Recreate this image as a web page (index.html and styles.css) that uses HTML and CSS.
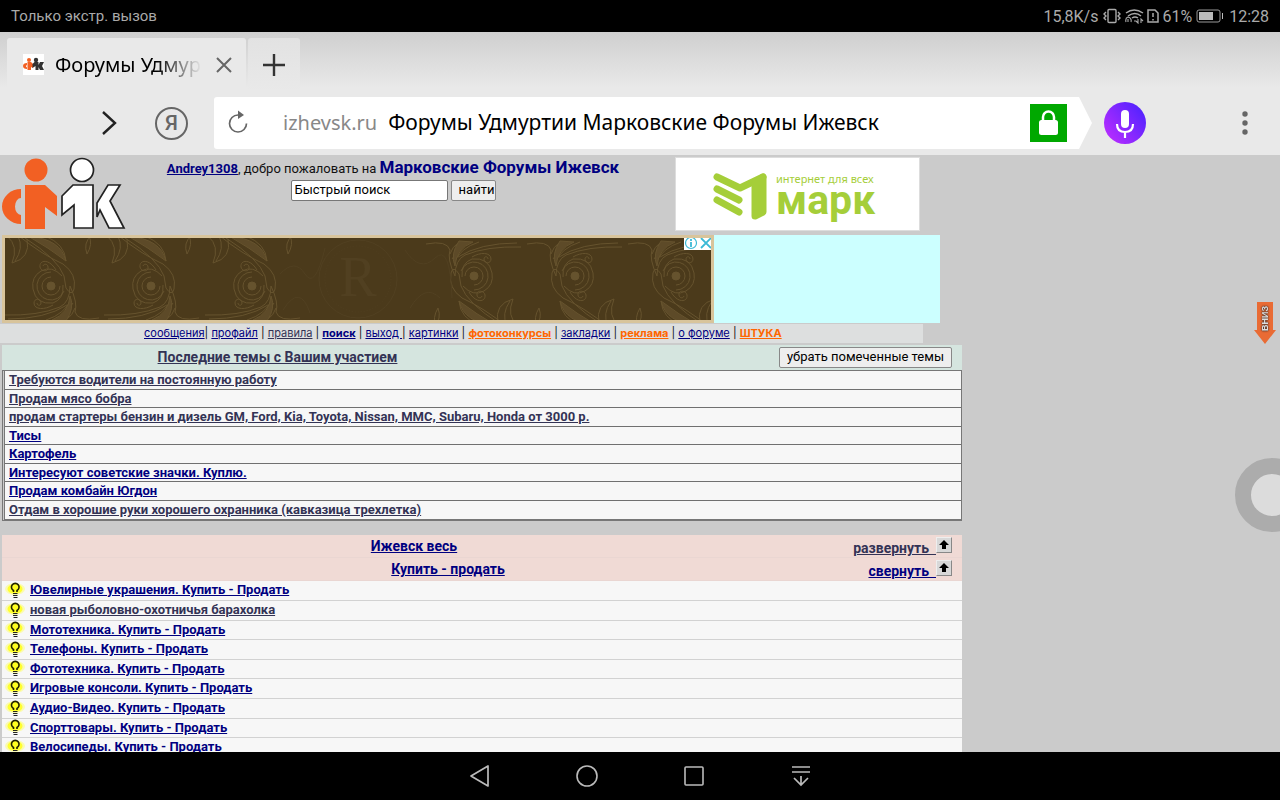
FILE: index.html
```html
<!DOCTYPE html>
<html lang="ru">
<head>
<meta charset="utf-8">
<title>Форумы Удмуртии Марковские Форумы Ижевск</title>
<link rel="stylesheet" href="styles.css">
</head>
<body>
<svg class="defs" width="0" height="0" aria-hidden="true">
  <defs>
    <symbol id="mk" viewBox="0 0 126 74">
      <g fill="#f26023">
        <circle cx="36" cy="13" r="11.500"/>
        <path d="M25 28H45L57 39V59L45 50V72H25Z"/>
        <path d="M21 32V41A6 8.500 0 0 0 21 58V67A19 17.500 0 0 1 21 32Z"/>
      </g>
      <g fill="#fff" stroke="#222" stroke-width="1.700">
        <circle cx="82" cy="13" r="11.500"/>
        <path d="M73 28H93V71H74V48L62 58V39Z"/>
        <path d="M108 28H120L110 44L124 71H109L100 53L97 60V46Z"/>
      </g>
    </symbol>
    <symbol id="bulb" viewBox="0 0 22 18">
      <ellipse cx="11" cy="8" rx="10" ry="6" fill="#ffff55" opacity=".45"/>
      <ellipse cx="11" cy="8" rx="7.500" ry="5" fill="#ffff22" opacity=".9"/>
      <path d="M9.500 11V9.500A3.800 3.800 0 1 1 13 9.500V11" fill="#ffff20" stroke="#222200" stroke-width="1.600"/>
      <path d="M9 12.500h4.500M9 14.500h4.500M9.500 16.500h4" stroke="#222" stroke-width="1"/>
    </symbol>
    <symbol id="up" viewBox="0 0 12 12"><path d="M6 1L11 6H8V10H4V6H1Z" fill="#000"/></symbol>
    <g id="scroll" fill="none" stroke="#66532e" stroke-width="1">
      <circle cx="48" cy="50" r="4" fill="#66532e"/>
      <path d="M48 41A9 9 0 1 0 57 50M48 36A14 14 0 1 0 61 55M59 40Q49 29 38 35Q28 41 30 53Q33 69 50 67Q61 63 60 49"/>
      <path d="M53 34C46 22 36 24 37 31C38 36 46 36 45 31C45 28 41 27 40 30"/>
      <path d="M50 69C42 74 31 74 31 67C31 62 38 62 38 67C38 70 34 70 34 67"/>
      <path d="M16 0Q38 18 60 28Q74 38 71 53Q69 61 63 52L61 40Q55 23 22 2"/>
      <path d="M25 0Q58 3 63 25Q46 12 25 0Z" fill="#5d4a28"/>
      <path d="M42 0Q62 8 63 25M4 0Q16 10 9 27Q28 22 24 3M12 25Q21 12 15 0M84 18Q80 7 88 0M84 18Q90 8 86 0"/>
      <path d="M1 79Q35 80 57 71Q67 66 67 50Q75 67 72 76Q75 86 96 82M5 83Q42 83 64 69M43 84Q62 78 68 63M55 84Q65 76 70 67M63 84Q70 79 72 72"/>
      <path d="M49 84Q66 77 67 60Q72 72 63 85Z" fill="#5d4a28"/>
    </g>
  </defs>
</svg>

<div class="status">
  <span class="carrier">Только экстр. вызов</span>
  <span class="status-right">
    <span>15,8K/s</span>
    <svg class="vibrate" width="18" height="16" viewBox="0 0 18 16" fill="none" stroke="#aaa" stroke-width="1.400"><rect x="5" y="1.500" width="8" height="13" rx="1"/><path d="M3 4L1 6L3 8L1 10L3 12M15 4L17 6L15 8L17 10L15 12"/></svg>
    <svg width="20" height="16" viewBox="0 0 20 16" fill="none" stroke="#aaa" stroke-width="1.500"><path d="M2 5Q10-1 19 5M4 8Q11 3 17 8M8 10Q11 8 14 10"/><path d="M2 14Q1 10 4 9Q8 10 7 14M4 14v-3M10 13h2M14 11v4l-2-2M17 15v-4l2 2" stroke-width="1.100"/></svg>
    <svg width="12" height="16" viewBox="0 0 12 16" fill="none" stroke="#aaa" stroke-width="1.500"><path d="M1 2H8L11 5V14H1ZM6 5v4M6 11v1.500"/></svg>
    <span>61%</span>
    <svg class="battery" width="28" height="14" viewBox="0 0 28 14"><rect x="1" y="1" width="23" height="12" rx="2" fill="none" stroke="#999"/><rect x="3" y="3" width="14" height="8" fill="#bbb"/><path d="M26 4h1v6h-1z" fill="#bbb"/></svg>
    <span>12:28</span>
  </span>
</div>

<header class="chrome">
  <div class="tabs">
    <div class="tab">
      <svg class="favicon" width="21" height="21" viewBox="0 0 21 21"><rect width="21" height="21" fill="#fff"/><g fill="#f26023"><circle cx="6" cy="6" r="2"/><path d="M4.500 8h3.500l2 2v4l-2-1v3H4.500zM4 9v2q-2 1 0 2.500V15q-4 0-4-3t4-3z"/></g><g fill="#333"><circle cx="13" cy="6" r="2.200"/><path d="M11.500 8h4v8h-3v-4l-3 2v-4zM17 8h4l-2 4 2 4h-4l-2-4z"/></g></svg>
      <span class="tab-title">Форумы Удмуртии</span>
      <button class="plain" aria-label="Закрыть"><svg width="16" height="16" viewBox="0 0 16 16" stroke="#666" stroke-width="2"><path d="M1 1L15 15M15 1L1 15"/></svg></button>
    </div>
    <button class="plain new-tab" aria-label="Новая вкладка"><svg width="22" height="22" viewBox="0 0 22 22" stroke="#333" stroke-width="2.400"><path d="M11 0V22M0 11H22"/></svg></button>
  </div>
  <div class="toolbar">
    <button class="plain" aria-label="Вперёд"><svg width="16" height="24" viewBox="0 0 16 24" fill="none" stroke="#222" stroke-width="2.400"><path d="M2 1L14 12L2 23"/></svg></button>
    <button class="ya" aria-label="Яндекс">Я</button>
    <div class="address">
      <svg width="20" height="24" viewBox="0 0 20 24" fill="none" stroke="#666" stroke-width="1.700"><path d="M10 5A8.500 8.500 0 1 0 18.500 13.500"/><path d="M10 0.500V9L16 5Z" fill="#666" stroke="none"/></svg>
      <span class="host">izhevsk.ru</span>
      <span class="page-title">Форумы Удмуртии Марковские Форумы Ижевск</span>
      <svg class="lock" width="37" height="38" viewBox="0 0 37 38"><rect width="37" height="38" fill="#00a800"/><rect x="9" y="16" width="19" height="15" rx="2.500" fill="#fff"/><path d="M13 17V13A5.500 5.500 0 0 1 24 13V17" fill="none" stroke="#fff" stroke-width="2.500"/></svg>
    </div>
    <button class="plain mic" aria-label="Голосовой поиск"><svg width="42" height="42" viewBox="0 0 42 42"><defs><linearGradient id="mg" x1="0" y1=".9" x2="1" y2=".1"><stop offset="0.100" stop-color="#b32cff"/><stop offset="1" stop-color="#4a22ff"/></linearGradient></defs><circle cx="21" cy="21" r="21" fill="url(#mg)"/><rect x="17" y="8" width="8" height="18" rx="4" fill="#fff"/><path d="M13 22Q13 30 21 30T29 22M21 30V36" fill="none" stroke="#fff" stroke-width="2.200"/></svg></button>
    <button class="plain more" aria-label="Меню"><svg width="6" height="24" viewBox="0 0 6 24" fill="#666"><circle cx="3" cy="3" r="2.700"/><circle cx="3" cy="12" r="2.700"/><circle cx="3" cy="21" r="2.700"/></svg></button>
  </div>
</header>

<main class="page">
  <div class="head">
    <svg width="126" height="74"><use href="#mk"/></svg>
    <div class="welcome">
      <p><a class="bold" href="#">Andrey1308</a>, добро пожаловать на <strong>Марковские Форумы Ижевск</strong></p>
      <form class="search"><input type="text" value="Быстрый поиск" aria-label="Быстрый поиск"><button type="button">найти</button></form>
    </div>
    <a class="mark" href="#">
      <svg width="55" height="50" viewBox="0 0 55 50" stroke="#a5ce39" stroke-width="7" stroke-linecap="round" stroke-linejoin="round" fill="none"><path d="M4 5L27 16L50 5"/><path d="M4 17L26 28M4 28L26 40"/><path d="M42 12V44L50 40V5Z" fill="#a5ce39"/></svg>
      <span class="mark-text"><small>интернет для всех</small><b>марк</b></span>
    </a>
  </div>

  <div class="ads">
    <div class="banner">
      <svg width="706" height="82" viewBox="0 0 706 82" aria-hidden="true">
        <rect width="706" height="82" fill="#4b3a1b"/>
        <use href="#scroll" x="-2" y="-2"/><use href="#scroll" x="98" y="-2"/><use href="#scroll" x="199" y="-2"/>
        <g transform="rotate(180 353 41)"><use href="#scroll" x="-13" y="-6"/><use href="#scroll" x="88" y="-6"/><use href="#scroll" x="189" y="-6"/></g>
        <g fill="none" stroke="#514021"><circle cx="353" cy="41" r="39"/><circle cx="353" cy="41" r="33" stroke-dasharray="1 2"/><path d="M275 36Q290 20 300 36T320 10M278 72Q295 45 305 75M400 12Q415 35 430 20T447 60M405 70Q420 45 435 60"/></g>
        <text x="353" y="58" text-anchor="middle" class="banner-r">R</text>
      </svg>
      <span class="ad-tools"><svg width="14" height="14" viewBox="0 0 14 14" fill="none" stroke="#3bb9d6" stroke-width="1.200"><circle cx="7" cy="7" r="5.500"/><path d="M7 6V11M7 3V5" stroke-width="1.800"/></svg><svg width="14" height="14" viewBox="0 0 14 14" stroke="#3bb9d6" stroke-width="1.800"><path d="M2 2L12 12M12 2L2 12"/></svg></span>
    </div>
    <div class="cyan"></div>
  </div>

  <nav class="menu"><a href="#">сообщения</a>| <a href="#">профайл</a> | <a class="seen" href="#">правила</a> | <a class="bold" href="#">поиск</a> | <a href="#">выход </a>| <a href="#">картинки</a> | <a class="hot" href="#">фотоконкурсы</a> | <a href="#">закладки</a> | <a class="hot" href="#">реклама</a> | <a href="#">о форуме</a> | <a class="hot" href="#">ШТУКА</a></nav>

  <section class="recent">
    <div class="recent-head"><h2><a class="seen" href="#">Последние темы с Вашим участием</a></h2><button type="button">убрать помеченные темы</button></div>
    <ul class="topics">
      <li><a class="seen" href="#">Требуются водители на постоянную работу</a></li>
      <li><a class="seen" href="#">Продам мясо бобра</a></li>
      <li><a class="seen" href="#">продам стартеры бензин и дизель GM, Ford, Kia, Toyota, Nissan, MMC, Subaru, Honda от 3000 р.</a></li>
      <li><a href="#">Тисы</a></li>
      <li><a href="#">Картофель</a></li>
      <li><a href="#">Интересуют советские значки. Куплю.</a></li>
      <li><a href="#">Продам комбайн Югдон</a></li>
      <li><a class="seen" href="#">Отдам в хорошие руки хорошего охранника (кавказица трехлетка)</a></li>
    </ul>
  </section>

  <section class="forums">
    <div class="group"><h2><a href="#">Ижевск весь</a></h2><a class="toggle seen" href="#">развернуть &nbsp;</a><button type="button" class="arrow" aria-label="Вверх"><svg width="12" height="12"><use href="#up"/></svg></button></div>
    <div class="group sub"><h2><a href="#">Купить - продать</a></h2><a class="toggle" href="#">свернуть &nbsp;</a><button type="button" class="arrow" aria-label="Вверх"><svg width="12" height="12"><use href="#up"/></svg></button></div>
    <ul class="list">
      <li><svg width="22" height="18"><use href="#bulb"/></svg><a href="#">Ювелирные украшения. Купить - Продать</a></li>
      <li><svg width="22" height="18"><use href="#bulb"/></svg><a class="seen" href="#">новая рыболовно-охотничья барахолка</a></li>
      <li><svg width="22" height="18"><use href="#bulb"/></svg><a href="#">Мототехника. Купить - Продать</a></li>
      <li><svg width="22" height="18"><use href="#bulb"/></svg><a href="#">Телефоны. Купить - Продать</a></li>
      <li><svg width="22" height="18"><use href="#bulb"/></svg><a href="#">Фототехника. Купить - Продать</a></li>
      <li><svg width="22" height="18"><use href="#bulb"/></svg><a href="#">Игровые консоли. Купить - Продать</a></li>
      <li><svg width="22" height="18"><use href="#bulb"/></svg><a href="#">Аудио-Видео. Купить - Продать</a></li>
      <li><svg width="22" height="18"><use href="#bulb"/></svg><a href="#">Спорттовары. Купить - Продать</a></li>
      <li><svg width="22" height="18"><use href="#bulb"/></svg><a href="#">Велосипеды. Купить - Продать</a></li>
    </ul>
  </section>

  <a class="down" href="#"><svg width="22" height="42" viewBox="0 0 22 42"><path d="M3 0H19V28H22L11 42L0 28H3Z" fill="#e96b34"/></svg><span>ВНИЗ</span></a>
  <div class="ring"></div>
</main>

<nav class="navbar">
  <button class="plain" aria-label="Назад"><svg width="22" height="22" viewBox="0 0 22 22" fill="none" stroke="#bbb" stroke-width="1.700" stroke-linejoin="round"><path d="M2 11L19 1V21Z"/></svg></button>
  <button class="plain" aria-label="Домой"><svg width="22" height="22" viewBox="0 0 22 22" fill="none" stroke="#bbb" stroke-width="1.600"><circle cx="11" cy="11" r="10"/></svg></button>
  <button class="plain" aria-label="Обзор"><svg width="22" height="22" viewBox="0 0 22 22" fill="none" stroke="#bbb" stroke-width="1.600"><rect x="2" y="2" width="18" height="18" rx="1"/></svg></button>
  <button class="plain" aria-label="Скрыть"><svg width="22" height="22" viewBox="0 0 22 22" fill="none" stroke="#bbb" stroke-width="1.700"><path d="M2 2H20M2 7H20M11 11V20M4 13L11 20L18 13"/></svg></button>
</nav>
</body>
</html>
```
FILE: styles.css
```css
* { box-sizing: border-box; }
body {
  margin: 0;
  height: 100vh;
  display: flex;
  flex-direction: column;
  overflow: hidden;
  background: #cbcbcb;
  font-family: Roboto, "Liberation Sans", sans-serif;
  font-size: 13px;
  color: #111;
}
svg { display: block; flex: none; }
.defs { position: absolute; }
p, h2, ul { margin: 0; padding: 0; }
ul { list-style: none; }
a { color: #000080; }
a.seen { color: #333355; }
.plain { border: 0; padding: 0; background: none; display: flex; align-items: center; justify-content: center; }

.status {
  height: 32px;
  flex: none;
  display: flex;
  justify-content: space-between;
  align-items: center;
  padding: 0 11px;
  background: #000;
  color: #aaa;
  font-size: 16px;
}
.carrier { font-size: 15px; }
.status-right { display: flex; align-items: center; gap: 3px; }
.vibrate { margin-left: 2px; }
.battery { margin: 0 2px 0 1px; }

.chrome {
  flex: none;
  background: linear-gradient(#cfcfcf, #e9e9e9 56px);
  font-family: "Noto Sans", "Open Sans", sans-serif;
  font-size: 20px;
  color: #000;
}
.tabs { display: flex; gap: 2px; padding: 6px 7px 0; height: 59px; }
.tab {
  width: 239px;
  display: flex;
  align-items: center;
  padding: 0 14px 0 16px;
  border-radius: 3px 3px 0 0;
  background: #e9e9e9;
}
.tab-title {
  flex: 1;
  margin: 0 16px 0 11px;
  overflow: hidden;
  white-space: nowrap;
  background: linear-gradient(90deg, #000 70%, #e0e0e0);
  background-clip: text;
  color: transparent;
}
.new-tab { width: 52px; border-radius: 3px 3px 0 0; background: linear-gradient(#e2e2e2, #e9e9e9); }
.toolbar { height: 64px; display: flex; align-items: center; padding-left: 101px; }
.ya {
  width: 33px;
  height: 33px;
  margin: 0 26px 0 38px;
  padding: 0;
  border: 2px solid #666;
  border-radius: 50%;
  background: none;
  color: #666;
  font: 500 21px/28px Roboto, sans-serif;
}
.address {
  flex: 1;
  height: 52px;
  display: flex;
  align-items: center;
  padding: 0 25px 2px 14px;
  background: #fff;
  border-radius: 3px 0 0 3px;
  clip-path: polygon(0 0, calc(100% - 13px) 0, 100% 50%, calc(100% - 13px) 100%, 0 100%);
}
.host { margin: 0 11px 0 35px; color: #888; }
.page-title { flex: 1; font-size: 21px; white-space: nowrap; }
.lock { margin-top: 2px; }
.mic { margin: 0 96px 0 12px; }
.more { margin-right: 32px; }

.page { flex: 1; min-height: 0; overflow: hidden; position: relative; background: #cbcbcb; }
.head { max-width: 920px; height: 80px; display: grid; grid-template-columns: 126px 1fr 260px; padding-top: 2px; }
.welcome { text-align: center; }
.welcome p { line-height: 20px; margin-bottom: 1px; }
.welcome strong { font-size: 17px; color: #000080; }
.bold { font-weight: bold; }
.search { display: flex; justify-content: center; gap: 3px; }
.search input {
  width: 157px;
  height: 21px;
  border: 1px solid #777;
  border-radius: 2px;
  padding: 0 3px 2px;
  background: #fff;
  font: 13px Roboto, sans-serif;
}
.search button {
  width: 45px;
  height: 21px;
  border: 1px solid #888;
  border-radius: 2px;
  padding: 0 0 2px 7px;
  overflow: hidden;
  background: #eee;
  font: 13px Roboto, sans-serif;
  white-space: nowrap;
}
.mark {
  width: 245px;
  height: 74px;
  justify-self: end;
  display: flex;
  align-items: flex-start;
  gap: 8px;
  padding: 14px 0 0 37px;
  background: #fff;
  border: 1px solid #ddd;
  color: #a5ce39;
  text-decoration: none;
}
.mark-text { display: flex; flex-direction: column; }
.mark-text small { font: 11px/13px "Noto Sans", sans-serif; white-space: nowrap; }
.mark-text b { font-size: 41px; line-height: 34px; margin-top: -2px; }

.ads { display: flex; max-width: 940px; height: 88px; padding-left: 2px; }
.banner { position: relative; width: 712px; flex: none; border: 3px solid #d8c49b; overflow: hidden; }
.banner-r { font: 56px "Liberation Serif", serif; fill: #514021; }
.ad-tools { position: absolute; top: -2px; right: -2px; display: flex; gap: 1px; background: #fff; }
.cyan { flex: 1; background: #ccffff; }

.menu {
  max-width: 923px;
  height: 19px;
  margin: 1px 0 2px;
  padding-left: 144px;
  background: #dddfdf;
  font-family: Inter, Roboto, sans-serif;
  font-size: 11px;
  line-height: 19px;
  white-space: nowrap;
}
.menu .hot { color: #ff6600; font-weight: bold; }

.recent, .forums { max-width: 960px; margin-left: 2px; }
.recent-head {
  height: 25px;
  display: grid;
  grid-template-columns: 58% 1fr;
  align-items: center;
  justify-items: end;
  padding: 0 10px 1px 0;
  background: #d5e5df;
}
h2 { font-size: 14px; line-height: 22px; font-weight: bold; text-align: center; }
.recent-head h2 { justify-self: stretch; }
.recent-head button {
  height: 21px;
  padding: 0 7px 1px;
  border: 1px solid #888;
  border-radius: 2px;
  background: #eee;
  font: 13px Roboto, sans-serif;
}
.topics { border: 1px solid #777; border-left: 3px double #777; border-bottom-width: 2px; }
.topics li {
  height: 19px;
  padding-left: 4px;
  line-height: 17px;
  font-weight: bold;
  background: #f7f7f7;
  border-bottom: 1px solid #707070;
}
.topics li:nth-child(even) { height: 18px; }
.topics li:last-child { border-bottom: 0; }

.forums { margin-top: 14px; }
.group {
  height: 23px;
  display: grid;
  grid-template-columns: 1fr 108px 16px;
  align-items: start;
  padding-right: 10px;
  background: #f0dad5;
  border-bottom: 1px solid #ead6d2;
}
.group h2 { padding-right: 2px; }
.sub h2 { padding-left: 68px; }
.toggle { justify-self: end; font-size: 14px; font-weight: bold; line-height: 22px; padding-top: 2px; }
.arrow {
  width: 16px;
  height: 16px;
  margin-top: 2px;
  padding: 1px;
  border: 1px solid;
  border-color: #eee #888 #888 #eee;
  background: #d8d8d8;
}
.list li {
  height: 20px;
  display: flex;
  align-items: center;
  gap: 4px;
  padding: 0 0 2px 2px;
  line-height: 17px;
  font-weight: bold;
  background: #f7f7f7;
  border-bottom: 1px solid #d2d2d2;
}
.list li:nth-child(5n), .list li:nth-child(5n + 3) { height: 19px; }

.down { position: absolute; right: 4px; top: 147px; }
.down span {
  position: absolute;
  inset: 0 3px 10px 3px;
  display: flex;
  align-items: center;
  justify-content: center;
  writing-mode: vertical-rl;
  transform: rotate(180deg);
  font: bold 9px "Liberation Sans", sans-serif;
  color: #ddd;
  text-shadow: 0 0 2px #333, 0 0 2px #333;
}
.ring {
  position: absolute;
  right: -29px;
  top: 303px;
  width: 74px;
  height: 74px;
  border: 16px solid #acacac;
  border-radius: 50%;
  background: #dcdcdc;
}

.navbar { height: 48px; flex: none; display: flex; align-items: center; justify-content: center; gap: 85px; background: #000; }
```
